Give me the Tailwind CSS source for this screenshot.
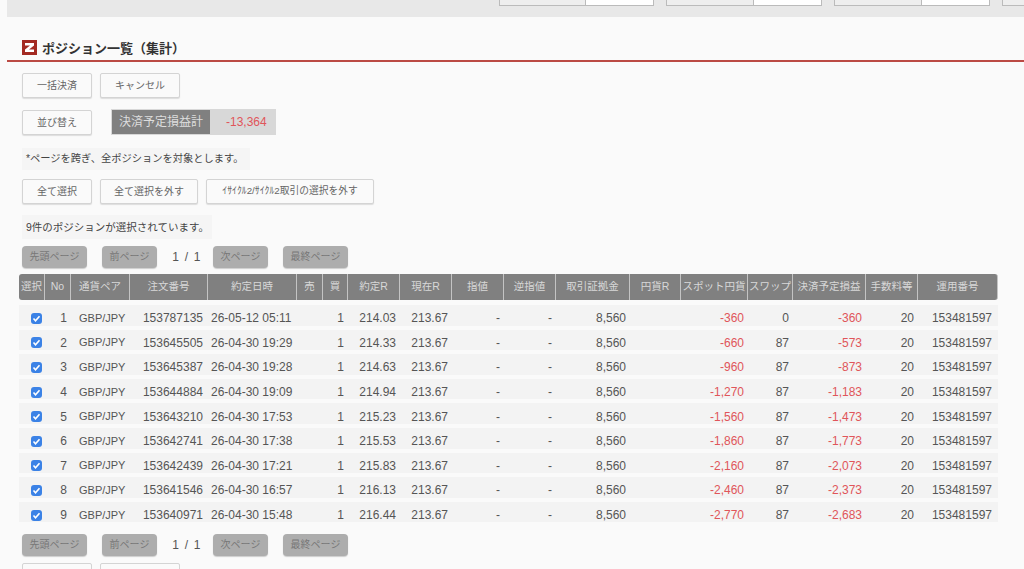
<!DOCTYPE html>
<html lang="ja">
<head>
    <meta charset="UTF-8">
    <title>ポジション一覧（集計）</title>
    <script src="https://cdn.jsdelivr.net/npm/@tailwindcss/browser@4"></script>
</head>
<body class="bg-[#fafafa] overflow-hidden h-[569px] text-[#555] text-[12px] font-['Liberation_Sans','Noto_Sans_CJK_JP',sans-serif]">
    <!-- top filter bar -->
    <div class="ml-[7px] h-[17px] bg-[#e8e8e8] flex justify-end items-start gap-[12px] -mr-[42px]">
        <div class="w-[155px] h-[6px] flex border-x border-b border-[#bbb]"><div class="w-[85px] bg-[#eee]"></div><div class="flex-1 bg-white border-l border-[#bbb]"></div></div>
        <div class="w-[156px] h-[6px] flex border-x border-b border-[#bbb]"><div class="w-[86px] bg-[#eee]"></div><div class="flex-1 bg-white border-l border-[#bbb]"></div></div>
        <div class="w-[156px] h-[6px] flex border-x border-b border-[#bbb]"><div class="w-[86px] bg-[#eee]"></div><div class="flex-1 bg-white border-l border-[#bbb]"></div></div>
        <div class="w-[64px] h-[6px] flex border-x border-b border-[#bbb] bg-[#eee]"></div>
    </div>

    <!-- heading -->
    <div class="ml-[7px] mt-[23px] pl-[15px] h-[20px] box-content border-b-2 border-[#bb4a44] flex items-start gap-[5px]">
        <svg class="w-[15px] h-[15px]" viewBox="0 0 15 15"><rect width="15" height="15" fill="#a32a22"/><path d="M3 3h9v2.400l-5 4.100h5v2.500h-9v-2.400l5-4.100h-5z" fill="#fff"/></svg>
        <h1 class="text-[13px] leading-[15px] pt-[1px] font-bold text-[#333]">ポジション一覧（集計）</h1>
    </div>

    <div class="pl-[22px]">
        <div class="flex gap-[8px] mt-[11px]">
            <button class="w-[70px] h-[25px] bg-[#fafafa] border border-[#d4d4d4] rounded-[2px] shadow-[0_1px_1px_#ddd] text-[10px] text-[#666]">一括決済</button>
            <button class="w-[80px] h-[25px] bg-[#fafafa] border border-[#d4d4d4] rounded-[2px] shadow-[0_1px_1px_#ddd] text-[10px] text-[#666]">キャンセル</button>
        </div>

        <div class="flex items-center gap-[19px] mt-[12px]">
            <button class="w-[70px] h-[25px] bg-[#fafafa] border border-[#d4d4d4] rounded-[2px] shadow-[0_1px_1px_#ddd] text-[10px] text-[#666]">並び替え</button>
            <div class="w-[165px] h-[26px] p-[1px] flex bg-[#d8d8d8] -mt-[2px]">
                <div class="w-[98px] pt-[1px] bg-[#808080] text-[#ddd] flex items-center justify-center">決済予定損益計</div>
                <div class="flex-1 pt-[1px] text-[#e0555a] flex items-center pl-[16px]">-13,364</div>
            </div>
        </div>

        <p class="mt-[13px] w-[228px] h-[22px] leading-[22px] pl-[4px] bg-[#f5f5f5] text-[10.25px] text-[#444]">*ページを跨ぎ、全ポジションを対象とします。</p>

        <div class="flex gap-[8px] mt-[9px]">
            <button class="w-[70px] h-[25px] bg-[#fafafa] border border-[#d4d4d4] rounded-[2px] shadow-[0_1px_1px_#ddd] text-[10px] text-[#666]">全て選択</button>
            <button class="w-[98px] h-[25px] bg-[#fafafa] border border-[#d4d4d4] rounded-[2px] shadow-[0_1px_1px_#ddd] text-[10px] text-[#666]">全て選択を外す</button>
            <button class="w-[168px] h-[25px] bg-[#fafafa] border border-[#d4d4d4] rounded-[2px] shadow-[0_1px_1px_#ddd] text-[9.750px] text-[#666]">ｲｻｲｸﾙ2/ｻｲｸﾙ2取引の選択を外す</button>
        </div>

        <p class="mt-[11px] w-[190px] h-[24px] leading-[24px] pl-[4px] bg-[#f5f5f5] text-[10.5px] text-[#444]">9件のポジションが選択されています。</p>

        <div class="flex items-center mt-[6px] h-[23px]">
            <button class="w-[65px] h-[22px] bg-[#adadad] rounded-[4px] shadow-[0_1px_1px_#ccc] text-[10px] text-[#777]">先頭ページ</button>
            <button class="ml-[15px] w-[55px] h-[22px] bg-[#adadad] rounded-[4px] shadow-[0_1px_1px_#ccc] text-[10px] text-[#777]">前ページ</button>
            <span class="w-[56px] pl-[4px] text-center tracking-[1.2px] text-[#555]">1 / 1</span>
            <button class="w-[55px] h-[22px] bg-[#adadad] rounded-[4px] shadow-[0_1px_1px_#ccc] text-[10px] text-[#777]">次ページ</button>
            <button class="ml-[15px] w-[65px] h-[22px] bg-[#adadad] rounded-[4px] shadow-[0_1px_1px_#ccc] text-[10px] text-[#777]">最終ページ</button>
        </div>
    </div>

    <!-- positions table -->
    <table class="ml-[19px] mt-[6px] w-[979px] table-fixed border-separate border-spacing-x-0 border-spacing-y-0 [&_tbody_td]:h-[14.600px] [&_tbody_td]:bg-[#f3f3f3] [&_tbody_td]:border-b-[4px] [&_tbody_td]:border-[#fafafa] [&_tbody_td]:box-content [&_tbody_td]:text-right [&_tbody_td]:leading-none [&_tbody_td]:p-0 [&_tbody_td]:pt-[6px] [&_tbody_td]:pr-[4px] [&_th]:h-[26px] [&_th]:bg-[#808080] [&_th]:border-r [&_th]:border-[#c4c4c4] [&_th]:text-[10.5px] [&_th]:font-normal [&_th]:text-[#d8d8d8] [&_th]:p-0">
        <colgroup>
            <col class="w-[26px]"><col class="w-[26px]"><col class="w-[59px]"><col class="w-[78px]"><col class="w-[89px]"><col class="w-[26px]"><col class="w-[25px]"><col class="w-[52px]"><col class="w-[52px]"><col class="w-[52px]"><col class="w-[52px]"><col class="w-[74px]"><col class="w-[51px]"><col class="w-[67px]"><col class="w-[45px]"><col class="w-[73px]"><col class="w-[52px]"><col class="w-[80px]">
        </colgroup>
        <thead>
            <tr>
                <th class="rounded-l-[3px]">選択</th><th>No</th><th>通貨ペア</th><th>注文番号</th><th>約定日時</th><th>売</th><th>買</th><th>約定R</th><th>現在R</th><th>指値</th><th>逆指値</th><th>取引証拠金</th><th>円貨R</th><th>スポット円貨</th><th>スワップ</th><th>決済予定損益</th><th>手数料等</th><th class="rounded-r-[3px] border-r-0">運用番号</th>
            </tr>
            <tr><th colspan="18" class="!h-[5px] !bg-transparent !border-0"></th></tr>
        </thead>
        <tbody>
            <tr><td class="!text-left !pl-[12px] !pr-0"><svg class="w-[11px] h-[11px]" viewBox="0 0 11 11"><rect width="11" height="11" rx="3" fill="#3b82e6"/><path d="M2.500 5.500l2 2.200 4-4.500" stroke="#fff" stroke-width="1.600" fill="none"/></svg></td><td>1</td><td class="!text-left !pl-[8px] text-[11px]">GBP/JPY</td><td class="!pr-[5px]">153787135</td><td class="!text-left !pl-[3px]">26-05-12 05:11</td><td></td><td>1</td><td>214.03</td><td>213.67</td><td>-</td><td>-</td><td>8,560</td><td></td><td class="text-[#e0555a]">-360</td><td>0</td><td class="text-[#e0555a]">-360</td><td>20</td><td class="!pr-[6px]">153481597</td></tr>
            <tr><td class="!text-left !pl-[12px] !pr-0"><svg class="w-[11px] h-[11px]" viewBox="0 0 11 11"><rect width="11" height="11" rx="3" fill="#3b82e6"/><path d="M2.500 5.500l2 2.200 4-4.500" stroke="#fff" stroke-width="1.600" fill="none"/></svg></td><td>2</td><td class="!text-left !pl-[8px] text-[11px]">GBP/JPY</td><td class="!pr-[5px]">153645505</td><td class="!text-left !pl-[3px]">26-04-30 19:29</td><td></td><td>1</td><td>214.33</td><td>213.67</td><td>-</td><td>-</td><td>8,560</td><td></td><td class="text-[#e0555a]">-660</td><td>87</td><td class="text-[#e0555a]">-573</td><td>20</td><td class="!pr-[6px]">153481597</td></tr>
            <tr><td class="!text-left !pl-[12px] !pr-0"><svg class="w-[11px] h-[11px]" viewBox="0 0 11 11"><rect width="11" height="11" rx="3" fill="#3b82e6"/><path d="M2.500 5.500l2 2.200 4-4.500" stroke="#fff" stroke-width="1.600" fill="none"/></svg></td><td>3</td><td class="!text-left !pl-[8px] text-[11px]">GBP/JPY</td><td class="!pr-[5px]">153645387</td><td class="!text-left !pl-[3px]">26-04-30 19:28</td><td></td><td>1</td><td>214.63</td><td>213.67</td><td>-</td><td>-</td><td>8,560</td><td></td><td class="text-[#e0555a]">-960</td><td>87</td><td class="text-[#e0555a]">-873</td><td>20</td><td class="!pr-[6px]">153481597</td></tr>
            <tr><td class="!text-left !pl-[12px] !pr-0"><svg class="w-[11px] h-[11px]" viewBox="0 0 11 11"><rect width="11" height="11" rx="3" fill="#3b82e6"/><path d="M2.500 5.500l2 2.200 4-4.500" stroke="#fff" stroke-width="1.600" fill="none"/></svg></td><td>4</td><td class="!text-left !pl-[8px] text-[11px]">GBP/JPY</td><td class="!pr-[5px]">153644884</td><td class="!text-left !pl-[3px]">26-04-30 19:09</td><td></td><td>1</td><td>214.94</td><td>213.67</td><td>-</td><td>-</td><td>8,560</td><td></td><td class="text-[#e0555a]">-1,270</td><td>87</td><td class="text-[#e0555a]">-1,183</td><td>20</td><td class="!pr-[6px]">153481597</td></tr>
            <tr><td class="!text-left !pl-[12px] !pr-0"><svg class="w-[11px] h-[11px]" viewBox="0 0 11 11"><rect width="11" height="11" rx="3" fill="#3b82e6"/><path d="M2.500 5.500l2 2.200 4-4.500" stroke="#fff" stroke-width="1.600" fill="none"/></svg></td><td>5</td><td class="!text-left !pl-[8px] text-[11px]">GBP/JPY</td><td class="!pr-[5px]">153643210</td><td class="!text-left !pl-[3px]">26-04-30 17:53</td><td></td><td>1</td><td>215.23</td><td>213.67</td><td>-</td><td>-</td><td>8,560</td><td></td><td class="text-[#e0555a]">-1,560</td><td>87</td><td class="text-[#e0555a]">-1,473</td><td>20</td><td class="!pr-[6px]">153481597</td></tr>
            <tr><td class="!text-left !pl-[12px] !pr-0"><svg class="w-[11px] h-[11px]" viewBox="0 0 11 11"><rect width="11" height="11" rx="3" fill="#3b82e6"/><path d="M2.500 5.500l2 2.200 4-4.500" stroke="#fff" stroke-width="1.600" fill="none"/></svg></td><td>6</td><td class="!text-left !pl-[8px] text-[11px]">GBP/JPY</td><td class="!pr-[5px]">153642741</td><td class="!text-left !pl-[3px]">26-04-30 17:38</td><td></td><td>1</td><td>215.53</td><td>213.67</td><td>-</td><td>-</td><td>8,560</td><td></td><td class="text-[#e0555a]">-1,860</td><td>87</td><td class="text-[#e0555a]">-1,773</td><td>20</td><td class="!pr-[6px]">153481597</td></tr>
            <tr><td class="!text-left !pl-[12px] !pr-0"><svg class="w-[11px] h-[11px]" viewBox="0 0 11 11"><rect width="11" height="11" rx="3" fill="#3b82e6"/><path d="M2.500 5.500l2 2.200 4-4.500" stroke="#fff" stroke-width="1.600" fill="none"/></svg></td><td>7</td><td class="!text-left !pl-[8px] text-[11px]">GBP/JPY</td><td class="!pr-[5px]">153642439</td><td class="!text-left !pl-[3px]">26-04-30 17:21</td><td></td><td>1</td><td>215.83</td><td>213.67</td><td>-</td><td>-</td><td>8,560</td><td></td><td class="text-[#e0555a]">-2,160</td><td>87</td><td class="text-[#e0555a]">-2,073</td><td>20</td><td class="!pr-[6px]">153481597</td></tr>
            <tr><td class="!text-left !pl-[12px] !pr-0"><svg class="w-[11px] h-[11px]" viewBox="0 0 11 11"><rect width="11" height="11" rx="3" fill="#3b82e6"/><path d="M2.500 5.500l2 2.200 4-4.500" stroke="#fff" stroke-width="1.600" fill="none"/></svg></td><td>8</td><td class="!text-left !pl-[8px] text-[11px]">GBP/JPY</td><td class="!pr-[5px]">153641546</td><td class="!text-left !pl-[3px]">26-04-30 16:57</td><td></td><td>1</td><td>216.13</td><td>213.67</td><td>-</td><td>-</td><td>8,560</td><td></td><td class="text-[#e0555a]">-2,460</td><td>87</td><td class="text-[#e0555a]">-2,373</td><td>20</td><td class="!pr-[6px]">153481597</td></tr>
            <tr><td class="!text-left !pl-[12px] !pr-0"><svg class="w-[11px] h-[11px]" viewBox="0 0 11 11"><rect width="11" height="11" rx="3" fill="#3b82e6"/><path d="M2.500 5.500l2 2.200 4-4.500" stroke="#fff" stroke-width="1.600" fill="none"/></svg></td><td>9</td><td class="!text-left !pl-[8px] text-[11px]">GBP/JPY</td><td class="!pr-[5px]">153640971</td><td class="!text-left !pl-[3px]">26-04-30 15:48</td><td></td><td>1</td><td>216.44</td><td>213.67</td><td>-</td><td>-</td><td>8,560</td><td></td><td class="text-[#e0555a]">-2,770</td><td>87</td><td class="text-[#e0555a]">-2,683</td><td>20</td><td class="!pr-[6px]">153481597</td></tr>
        </tbody>
    </table>

    <div class="pl-[22px]">
        <div class="flex items-center mt-[7px] h-[23px]">
            <button class="w-[65px] h-[22px] bg-[#adadad] rounded-[4px] shadow-[0_1px_1px_#ccc] text-[10px] text-[#777]">先頭ページ</button>
            <button class="ml-[15px] w-[55px] h-[22px] bg-[#adadad] rounded-[4px] shadow-[0_1px_1px_#ccc] text-[10px] text-[#777]">前ページ</button>
            <span class="w-[56px] pl-[4px] text-center tracking-[1.2px] text-[#555]">1 / 1</span>
            <button class="w-[55px] h-[22px] bg-[#adadad] rounded-[4px] shadow-[0_1px_1px_#ccc] text-[10px] text-[#777]">次ページ</button>
            <button class="ml-[15px] w-[65px] h-[22px] bg-[#adadad] rounded-[4px] shadow-[0_1px_1px_#ccc] text-[10px] text-[#777]">最終ページ</button>
        </div>
        <div class="flex gap-[8px] mt-[7px]">
            <div class="w-[70px] h-[25px] bg-[#fafafa] border border-[#d4d4d4] rounded-[2px]"></div>
            <div class="w-[80px] h-[25px] bg-[#fafafa] border border-[#d4d4d4] rounded-[2px]"></div>
        </div>
    </div>
</body>
</html>
